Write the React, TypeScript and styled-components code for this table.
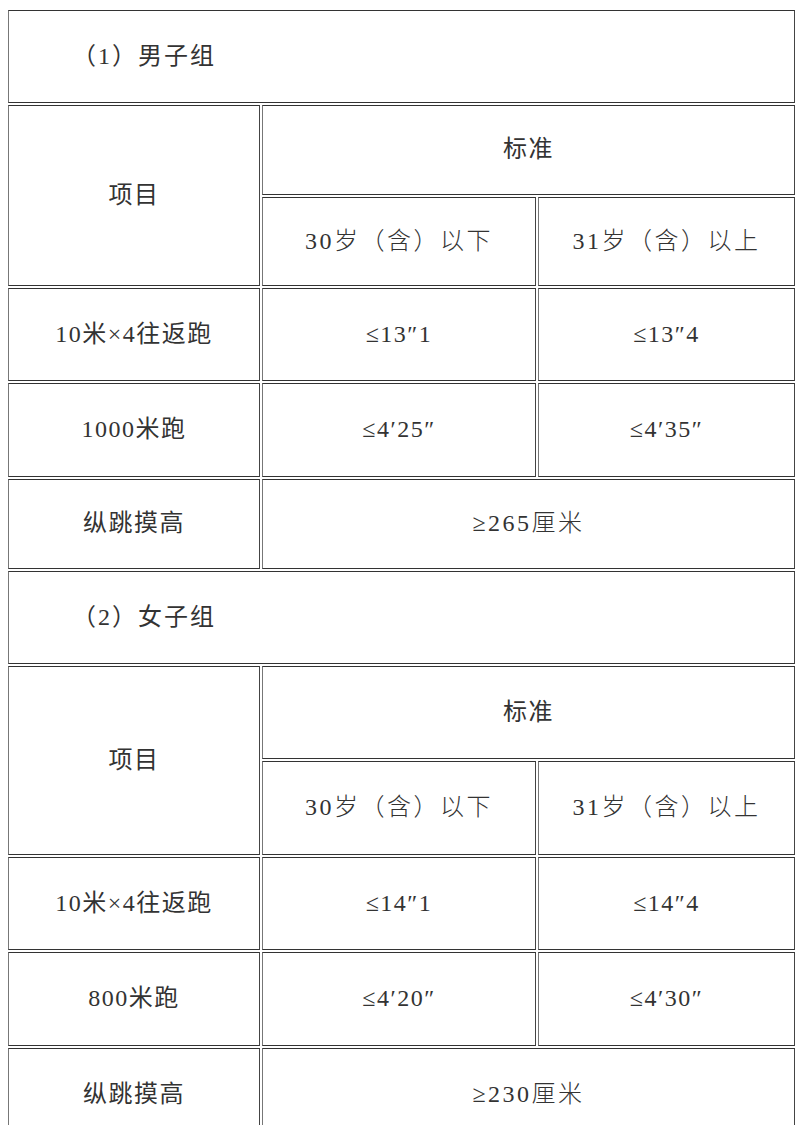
import styled, { createGlobalStyle } from "styled-components"

const GlobalStyle = createGlobalStyle`
    body {
        margin: 0;
        background: #fff;
    }
`

type Group = {
    title: string
    heights: number[]
    rows: { name: string; young: string; old?: string }[]
}

// row heights are read off the screenshot
const groups: Group[] = [
    {
        title: "（1）男子组",
        heights: [93, 90, 89, 93, 94, 90],
        rows: [
            { name: "10米×4往返跑", young: "≤13″1", old: "≤13″4" },
            { name: "1000米跑", young: "≤4′25″", old: "≤4′35″" },
            { name: "纵跳摸高", young: "≥265厘米" },
        ],
    },
    {
        title: "（2）女子组",
        heights: [93, 93, 94, 93, 94, 94],
        rows: [
            { name: "10米×4往返跑", young: "≤14″1", old: "≤14″4" },
            { name: "800米跑", young: "≤4′20″", old: "≤4′30″" },
            { name: "纵跳摸高", young: "≥230厘米" },
        ],
    },
]

const GroupRows = ({ group }: { group: Group }) => {
    const h = group.heights
    return (
        <>
            <Row $h={h[0]}>
                <TitleCell colSpan={3}>{group.title}</TitleCell>
            </Row>
            <Row $h={h[1]}>
                <Cell rowSpan={2}>项目</Cell>
                <Cell colSpan={2}>标准</Cell>
            </Row>
            <Row $h={h[2]}>
                <Cell $light>30岁（含）以下</Cell>
                <Cell $light>31岁（含）以上</Cell>
            </Row>
            {group.rows.map((row, i) => (
                <Row key={row.name} $h={h[3 + i]}>
                    <Cell>{row.name}</Cell>
                    {row.old ? (
                        <>
                            <Cell>{row.young}</Cell>
                            <Cell>{row.old}</Cell>
                        </>
                    ) : (
                        <Cell colSpan={2} $light>{row.young}</Cell>
                    )}
                </Row>
            ))}
        </>
    )
}

export default function App() {
    return (
        <>
            <GlobalStyle />
            <Table>
                <colgroup>
                    <Col $w={252} />
                    <Col $w={274} />
                    <Col $w={257} />
                </colgroup>
                <tbody>
                    {groups.map((group) => (
                        <GroupRows key={group.title} group={group} />
                    ))}
                </tbody>
            </Table>
        </>
    )
}

const Table = styled.table`
    margin: 8px 0 0 6px;
    width: 791px;
    table-layout: fixed;
    border-collapse: separate;
    border-spacing: 2px;
`

const Col = styled.col<{ $w: number }>`
    width: ${(p) => p.$w}px;
`

const Row = styled.tr<{ $h: number }>`
    height: ${(p) => p.$h}px;
`

const Cell = styled.td<{ $light?: boolean }>`
    border-top: 1px solid #333;
    border-bottom: 1px solid #333;
    border-left: 1px solid #777;
    border-right: 1px solid #444;
    padding: 0;
    font-family: "Liberation Serif", "Noto Sans CJK SC", serif;
    font-size: 24px;
    color: #333;
    text-align: center;
    vertical-align: middle;
    line-height: 1.3;
    letter-spacing: ${(p) => (p.$light ? "2.5px" : "1.5px")};
    font-weight: ${(p) => (p.$light ? 300 : 400)};
`

const TitleCell = styled(Cell)`
    text-align: left;
    padding-left: 15px;
    text-indent: 2em;
    letter-spacing: 2px;
`
